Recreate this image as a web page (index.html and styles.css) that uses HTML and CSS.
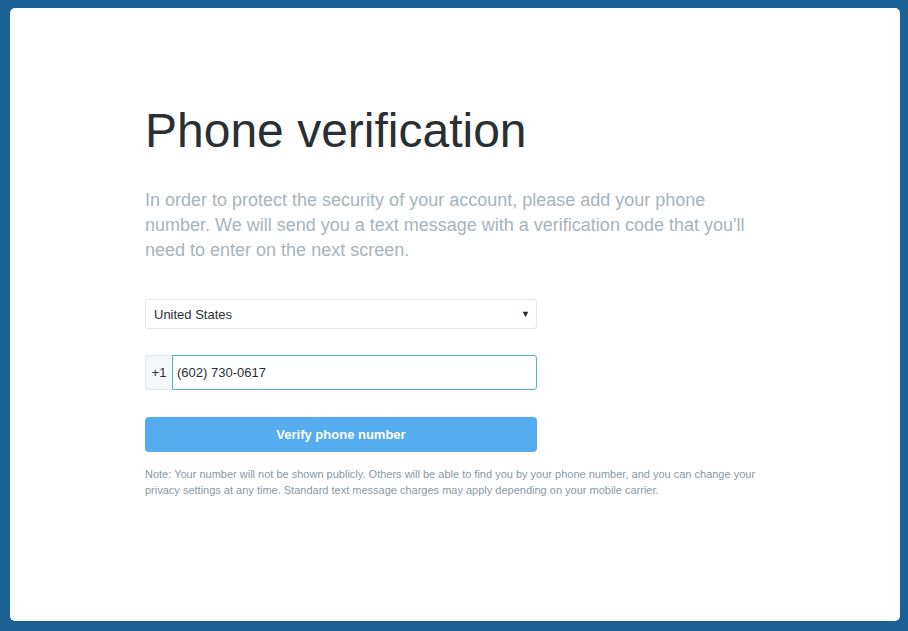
FILE: index.html
```html
<!DOCTYPE html>
<html>
<head>
<meta charset="utf-8">
<link rel="stylesheet" href="styles.css">
</head>
<body>
<div class="card">
  <div class="content">
    <h1 class="title">Phone verification</h1>
    <p class="intro">In order to protect the security of your account, please add your phone number. We will send you a text message with a verification code that you'll need to enter on the next screen.</p>
    <div class="select">
      <span>United States</span>
      <span class="arrow">▼</span>
    </div>
    <div class="phone">
      <span class="prefix">+1</span>
      <span class="number">(602) 730-0617</span>
    </div>
    <div class="button">Verify phone number</div>
    <p class="note">Note: Your number will not be shown publicly. Others will be able to find you by your phone number, and you can change your privacy settings at any time. Standard text message charges may apply depending on your mobile carrier.</p>
  </div>
</div>
</body>
</html>
```
FILE: styles.css
```css
html, body {
  margin: 0;
  padding: 0;
  background: #1c6196;
  font-family: "Liberation Sans", Arial, sans-serif;
}
body {
  padding: 8px 8px 10px 10px;
  height: 631px;
  box-sizing: border-box;
}
.card {
  background: #fff;
  border-radius: 5px;
  height: 613px;
}
.content {
  padding: 95px 0 0 135px;
}
.title {
  margin: 0;
  font-size: 48px;
  font-weight: normal;
  color: #292f33;
  line-height: 55px;
}
.intro {
  margin: 30px 0 0 0;
  width: 610px;
  font-size: 18px;
  line-height: 25px;
  color: #a7b4bc;
}
.select {
  margin-top: 36px;
  width: 392px;
  height: 30px;
  box-sizing: border-box;
  border: 1px solid #e1e8ed;
  border-radius: 3px;
  display: flex;
  align-items: center;
  justify-content: space-between;
  padding: 0 6px 0 8px;
  font-size: 13px;
  color: #292f33;
}
.arrow {
  font-size: 9px;
  color: #222;
}
.phone {
  margin-top: 26px;
  width: 392px;
  height: 35px;
  display: flex;
  font-size: 13px;
  color: #292f33;
}
.prefix {
  width: 27px;
  box-sizing: border-box;
  background: #f5f8fa;
  border: 1px solid #e1e8ed;
  border-right: none;
  border-radius: 3px 0 0 3px;
  display: flex;
  align-items: center;
  justify-content: center;
}
.number {
  flex: 1;
  border: 1px solid #56b4c9;
  border-radius: 0 3px 3px 0;
  display: flex;
  align-items: center;
  padding-left: 4px;
}
.button {
  margin-top: 27px;
  width: 392px;
  height: 35px;
  background: #55acee;
  border-radius: 4px;
  color: #fff;
  font-weight: bold;
  font-size: 13px;
  display: flex;
  align-items: center;
  justify-content: center;
}
.note {
  margin: 14px 0 0 0;
  width: 620px;
  font-size: 11px;
  line-height: 16px;
  color: #8899a6;
}
```
